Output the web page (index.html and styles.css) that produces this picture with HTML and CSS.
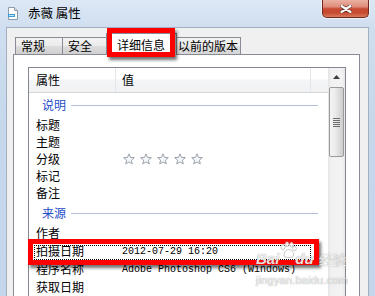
FILE: index.html
```html
<!DOCTYPE html>
<html lang="zh-CN">
<head>
<meta charset="utf-8">
<title>赤薇 属性</title>
<link rel="stylesheet" href="styles.css">
</head>
<body>
<div class="win">
  <div class="titlebar">
    <svg class="appicon" viewBox="0 0 10 13" width="10" height="13">
      <path d="M0.5 0.5 H6.5 L9.5 3.5 V12.5 H0.5 Z" fill="#fdfdfd" stroke="#8d9aa8"/>
      <path d="M6.5 0.5 V3.5 H9.5" fill="#e6ebf0" stroke="#8d9aa8"/>
      <rect x="0" y="7" width="7" height="3" fill="#3f9ad6"/>
      <rect x="1" y="8" width="5" height="1" fill="#bfe3f7"/>
    </svg>
    <span class="title">赤薇 属性</span>
    <div class="close">
      <svg viewBox="0 0 12 8" width="12" height="8">
        <path d="M1.5 1 L10.5 7 M10.5 1 L1.5 7" stroke="#5a2a20" stroke-width="3.6" stroke-linecap="round"/>
        <path d="M1.5 1 L10.5 7 M10.5 1 L1.5 7" stroke="#ffffff" stroke-width="2.2" stroke-linecap="round"/>
      </svg>
    </div>
  </div>
  <div class="frame">
    <div class="dialog">
      <div class="tabs">
        <div class="tab w-general">常规</div>
        <div class="tab w-security">安全</div>
        <div class="tab active">详细信息</div>
        <div class="tab w-prev">以前的版本</div>
      </div>
      <div class="panel">
        <div class="listbox">
          <div class="list">
            <div class="header">
              <div class="hcell c1">属性</div>
              <div class="hcell c2">值</div>
              <div class="hcell c3"></div>
            </div>
            <div class="group"><span class="gname">说明</span><i class="gline"></i></div>
            <div class="row"><span class="k">标题</span><span class="v"></span></div>
            <div class="row"><span class="k">主题</span><span class="v"></span></div>
            <div class="row"><span class="k">分级</span><span class="v stars">
              <svg class="star" viewBox="0 0 12 12" width="12" height="12"><polygon points="6,0.8 7.47,4.38 11.33,4.67 8.38,7.17 9.29,10.93 6,8.9 2.71,10.93 3.62,7.17 0.67,4.67 4.53,4.38"/></svg>
              <svg class="star" viewBox="0 0 12 12" width="12" height="12"><polygon points="6,0.8 7.47,4.38 11.33,4.67 8.38,7.17 9.29,10.93 6,8.9 2.71,10.93 3.62,7.17 0.67,4.67 4.53,4.38"/></svg>
              <svg class="star" viewBox="0 0 12 12" width="12" height="12"><polygon points="6,0.8 7.47,4.38 11.33,4.67 8.38,7.17 9.29,10.93 6,8.9 2.71,10.93 3.62,7.17 0.67,4.67 4.53,4.38"/></svg>
              <svg class="star" viewBox="0 0 12 12" width="12" height="12"><polygon points="6,0.8 7.47,4.38 11.33,4.67 8.38,7.17 9.29,10.93 6,8.9 2.71,10.93 3.62,7.17 0.67,4.67 4.53,4.38"/></svg>
              <svg class="star" viewBox="0 0 12 12" width="12" height="12"><polygon points="6,0.8 7.47,4.38 11.33,4.67 8.38,7.17 9.29,10.93 6,8.9 2.71,10.93 3.62,7.17 0.67,4.67 4.53,4.38"/></svg>
            </span></div>
            <div class="row"><span class="k">标记</span><span class="v"></span></div>
            <div class="row"><span class="k">备注</span><span class="v"></span></div>
            <div class="group"><span class="gname">来源</span><i class="gline"></i></div>
            <div class="row tall"><span class="k">作者</span><span class="v"></span></div>
            <div class="row tall focus"><span class="k">拍摄日期</span><span class="v mono">2012-07-29 16:20</span></div>
            <div class="row tall"><span class="k">程序名称</span><span class="v mono">Adobe Photoshop CS6 (Windows)</span></div>
            <div class="row tall"><span class="k">获取日期</span><span class="v"></span></div>
          </div>
          <div class="scrollbar">
            <div class="sb-btn">
              <svg viewBox="0 0 7 4" width="7" height="4"><path d="M0 4 L3.5 0 L7 4 Z" fill="#404040"/></svg>
            </div>
            <div class="thumb">
              <svg viewBox="0 0 7 9" width="7" height="9">
                <path d="M0 0.5 H7 M0 2.5 H7 M0 4.5 H7 M0 6.5 H7 M0 8.5 H7" stroke="#6d6d6d" stroke-width="1"/>
              </svg>
            </div>
          </div>
        </div>
      </div>
    </div>
  </div>
  <div class="watermark">
    <div class="wm-line1">
      <span class="wm-bai">Bai</span>
      <svg class="wm-paw" viewBox="0 0 18 18" width="18" height="18">
        <ellipse cx="4" cy="6" rx="2" ry="2.6"/>
        <ellipse cx="8" cy="3" rx="2" ry="2.6"/>
        <ellipse cx="12.5" cy="3.5" rx="2" ry="2.6"/>
        <ellipse cx="15.5" cy="7.5" rx="1.8" ry="2.4"/>
        <path d="M5 15 C5 10 8 8.5 10 8.5 C13 8.5 15 12 14.5 15 C13 17 7 17 5 15 Z"/>
      </svg>
      <span class="wm-du">du</span>
      <span class="wm-jy">经验</span>
    </div>
    <div class="wm-line2">jingyan.baidu.com</div>
  </div>
</div>
</body>
</html>
```

FILE: styles.css
```css
*,
*::before,
*::after {
  box-sizing: border-box;
  margin: 0;
  padding: 0;
}

html,
body {
  width: 375px;
  height: 296px;
  overflow: hidden;
}

body {
  font-family: "Noto Sans CJK SC", "Noto Sans", sans-serif;
  font-size: 12px;
  color: #000;
  background: #c8d9ec;
}

.win {
  position: relative;
  width: 375px;
  height: 296px;
  display: flex;
  flex-direction: column;
  background: linear-gradient(#dde8f4 0, #cfdef0 27px, #c6d8ec 120px, #c3d6ec 296px);
}

/* ---------- title bar ---------- */
.titlebar {
  flex: none;
  height: 27px;
  display: flex;
  align-items: flex-start;
  padding-left: 8px;
}

.appicon {
  margin-top: 7px;
  flex: none;
}

.title {
  margin-left: 10px;
  line-height: 26px;
  font-size: 12.5px;
  color: #000;
}

.close {
  margin-left: auto;
  margin-right: 6px;
  width: 47px;
  height: 18px;
  display: flex;
  align-items: center;
  justify-content: center;
  border: 1px solid #6e2a20;
  border-top: none;
  border-radius: 0 0 5px 5px;
  background: linear-gradient(#eab1a3 0%, #dd8c78 40%, #c84b33 52%, #c44a30 75%, #dc7a5c 100%);
  box-shadow: 0 0 0 1px rgba(255, 255, 255, 0.55);
}

/* ---------- frame / dialog ---------- */
.frame {
  flex: 1;
  display: flex;
  padding: 0 6px;
  min-height: 0;
}

.dialog {
  flex: 1;
  display: flex;
  flex-direction: column;
  background: #f0f0f0;
  border: 1px solid #a3b0c0;
  border-bottom: none;
  padding: 5px 8px 0 6px;
  min-height: 0;
}

.tabs {
  flex: none;
  height: 21px;
  display: flex;
  align-items: flex-end;
  padding-left: 2px;
  position: relative;
  z-index: 2;
}

.tab {
  height: 17px;
  line-height: 15px;
  padding-left: 5px;
  border: 1px solid #898c95;
  border-bottom: none;
  background: linear-gradient(#f3f3f3, #ebebeb 50%, #dddddd 51%, #cfcfcf);
  white-space: nowrap;
  font-size: 12px;
}

.w-general {
  width: 48px;
}

.w-security {
  width: 46px;
  margin-left: -1px;
}

.w-prev {
  width: 66px;
  margin-left: -2px;
  padding-left: 2px;
  background: linear-gradient(#f3f3f3, #ececec 50%, #e0e0e0 51%, #d6d6d6);
}

.tab.active {
  position: relative;
  z-index: 3;
  width: 71px;
  height: 22px;
  margin-left: -2px;
  margin-bottom: -1px;
  padding-left: 10px;
  padding-top: 2px;
  line-height: 17px;
  background: #fff;
  font-size: 12px;
}

.tab.active::after {
  content: "";
  position: absolute;
  left: 0;
  top: -6px;
  width: 68px;
  height: 29px;
  border: 5px solid #ff0000;
  box-shadow: 2px 3px 3px rgba(0, 0, 0, 0.55);
}

.panel {
  flex: 1;
  display: flex;
  flex-direction: column;
  background: #fff;
  border: 1px solid #898c95;
  border-bottom: none;
  padding: 12px 13px 0 14px;
  min-height: 0;
}

/* ---------- list box ---------- */
.listbox {
  flex: 1;
  display: flex;
  border: 1px solid #828790;
  border-bottom: none;
  min-height: 0;
  background: #fff;
}

.list {
  flex: 1;
  display: flex;
  flex-direction: column;
  min-width: 0;
}

.header {
  flex: none;
  height: 25px;
  display: flex;
  border-bottom: 1px solid #d5d5d5;
  background: linear-gradient(#ffffff 0, #ffffff 45%, #f4f5f7 50%, #f1f2f4 100%);
}

.hcell {
  line-height: 24px;
  border-right: 1px solid #e3e6ea;
  font-size: 12px;
}

.c1 {
  width: 87px;
  padding-left: 7px;
}

.c2 {
  width: 195px;
  padding-left: 6px;
}

.c3 {
  flex: 1;
  border-right: none;
}

.group {
  flex: none;
  height: 23px;
  display: flex;
  align-items: center;
  padding-left: 13px;
  padding-right: 10px;
}

.gname {
  color: #1e4cc8;
  line-height: 16px;
  font-size: 12px;
}

.gline {
  flex: 1;
  height: 1px;
  margin-left: 5px;
  margin-top: 1px;
  background: #b3bfdb;
}

.row {
  flex: none;
  height: 17px;
  display: flex;
  align-items: center;
  position: relative;
}

.row.tall {
  height: 18px;
}

.k {
  width: 87px;
  padding-left: 7px;
  line-height: 16px;
  font-size: 12px;
  white-space: nowrap;
}

.v {
  flex: 1;
  padding-left: 6px;
  white-space: nowrap;
  display: flex;
  align-items: center;
}

.mono {
  font-family: "Liberation Mono", "DejaVu Sans Mono", monospace;
  font-size: 10px;
  line-height: 14px;
  padding-top: 1px;
}

.stars {
  gap: 5px;
  padding-left: 7px;
}

.star {
  flex: none;
  fill: #f6f7f9;
  stroke: #9aa3ae;
  stroke-width: 1;
}

.focus::before {
  content: "";
  position: absolute;
  left: 5px;
  top: 3px;
  width: 277px;
  height: 15px;
  border: 1px dotted #000;
}

.focus::after {
  content: "";
  position: absolute;
  left: -1px;
  top: -3px;
  width: 291px;
  height: 26px;
  border: 5px solid #ff0000;
  box-shadow: 2px 3px 3px rgba(0, 0, 0, 0.55);
  z-index: 2;
}

/* ---------- scrollbar ---------- */
.scrollbar {
  flex: none;
  width: 17px;
  display: flex;
  flex-direction: column;
  align-items: center;
  background: linear-gradient(90deg, #e4e4e4 0, #f1f1f1 3px, #f3f3f3 14px, #e8e8e8 17px);
}

.sb-btn {
  flex: none;
  height: 17px;
  width: 17px;
  display: flex;
  align-items: center;
  justify-content: center;
  padding-top: 1px;
}

.thumb {
  flex: none;
  width: 15px;
  height: 70px;
  margin-top: 2px;
  border: 1px solid #9a9a9a;
  border-radius: 2px;
  background: linear-gradient(90deg, #f4f4f4 0, #ececec 40%, #dcdcdc 70%, #cdcdcd 100%);
  display: flex;
  align-items: center;
  justify-content: center;
}

/* ---------- watermark ---------- */
.watermark {
  position: absolute;
  left: 256px;
  top: 241px;
  z-index: 5;
  color: rgba(255, 255, 255, 0.85);
  font-family: "Liberation Sans", Arial, sans-serif;
  text-shadow: 0 0 1px rgba(80, 80, 80, 0.7);
  pointer-events: none;
}

.wm-line1 {
  display: flex;
  align-items: flex-end;
  height: 26px;
}

.wm-bai,
.wm-du {
  font-size: 15px;
  font-weight: bold;
  line-height: 16px;
  font-style: italic;
}

.wm-paw {
  fill: rgba(255, 255, 255, 0.8);
  stroke: rgba(110, 110, 110, 0.6);
  stroke-width: 0.6;
  align-self: flex-start;
  margin: 0 -2px 0 0;
}

.wm-jy {
  font-family: "Noto Sans CJK SC", sans-serif;
  font-size: 14px;
  line-height: 16px;
  margin-left: 5px;
}

.wm-line2 {
  font-size: 11px;
  line-height: 14px;
  margin-top: 6px;
  letter-spacing: 0.2px;
}
```
